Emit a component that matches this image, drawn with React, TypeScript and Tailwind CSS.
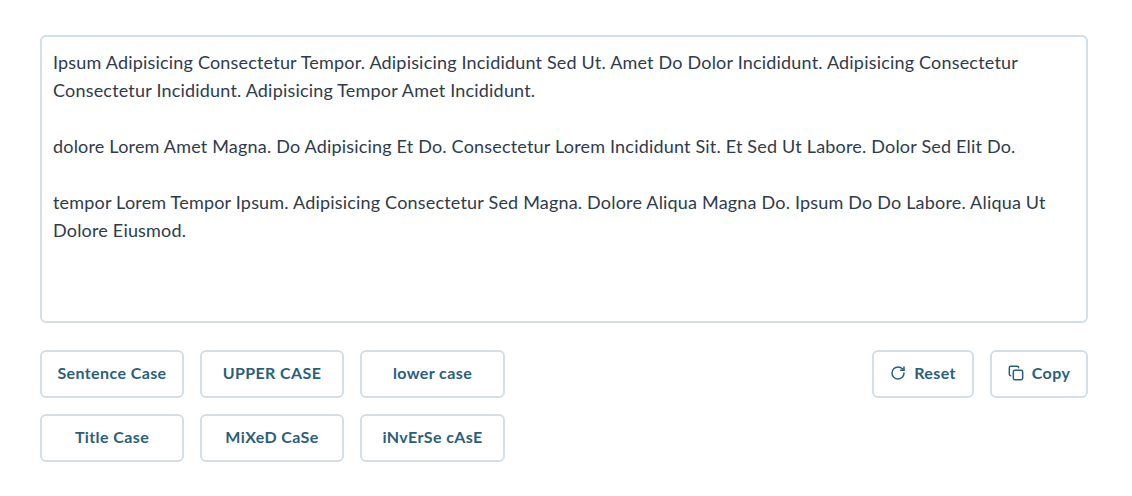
import { RotateCw, Copy } from "lucide-react";

const text = `Ipsum Adipisicing Consectetur Tempor. Adipisicing Incididunt Sed Ut. Amet Do Dolor Incididunt. Adipisicing Consectetur Consectetur Incididunt. Adipisicing Tempor Amet Incididunt.

dolore Lorem Amet Magna. Do Adipisicing Et Do. Consectetur Lorem Incididunt Sit. Et Sed Ut Labore. Dolor Sed Elit Do.

tempor Lorem Tempor Ipsum. Adipisicing Consectetur Sed Magna. Dolore Aliqua Magna Do. Ipsum Do Do Labore. Aliqua Ut Dolore Eiusmod.`;

const cases = ["Sentence Case", "UPPER CASE", "lower case", "Title Case", "MiXeD CaSe", "iNvErSe cAsE"];

const btn =
  "h-12 flex items-center justify-center gap-2 rounded-md border-2 border-[#d3dfe8] bg-white pb-[2px] text-[16px] tracking-[0.4px] font-bold text-[#2a5f7c]";

const App = () => {
  return (
    <div className="min-h-[496px] bg-white pl-10 pr-11 pt-[35px] font-['Lato','Noto_Sans',sans-serif]">
      <textarea
        readOnly
        defaultValue={text}
        className="block h-[288px] w-full resize-none rounded-md border-2 border-[#d3dfe8] pl-[11px] pr-3 pt-[11px] pb-3 text-[18px] tracking-[0.19px] leading-7 text-[#2f3b4b] outline-none"
      />
      <div className="mt-[27px] flex items-start justify-between">
        <div className="grid grid-cols-[144px_144px_145px] gap-4">
          {cases.map((label) => (
            <button key={label} className={btn}>
              {label}
            </button>
          ))}
        </div>
        <div className="flex gap-4">
          <button className={`${btn} w-[102px]`}>
            <RotateCw size={16} strokeWidth={2.25} />
            Reset
          </button>
          <button className={`${btn} w-[98px]`}>
            <Copy size={16} strokeWidth={2.25} />
            Copy
          </button>
        </div>
      </div>
    </div>
  );
};

export default App;
